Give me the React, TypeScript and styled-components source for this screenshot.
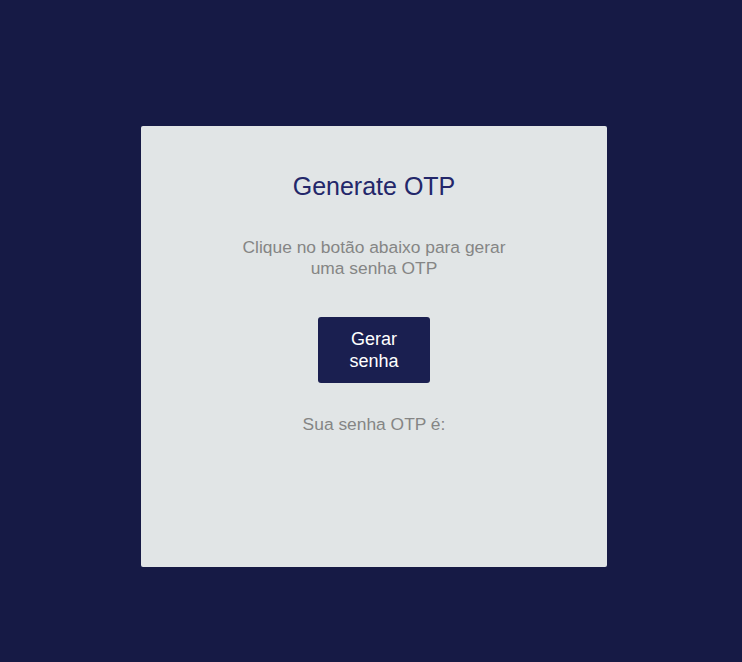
import React from "react";
import styled, { createGlobalStyle } from "styled-components";

const Global = createGlobalStyle`
  html, body { margin: 0; padding: 0; background: #161a45; }
  body { font-family: "Liberation Sans", Arial, sans-serif; }
`;

const Page = styled.div`
  min-height: 662px;
  box-sizing: border-box;
  display: flex;
  justify-content: center;
  align-items: flex-start;
  padding: 126px 0 0 6px;
`;

const Card = styled.div`
  width: 466px;
  height: 441px;
  box-sizing: border-box;
  background: #e1e5e6;
  border-radius: 2px;
  display: flex;
  flex-direction: column;
  align-items: center;
  padding-top: 46px;
  text-align: center;
`;

const Title = styled.h2`
  margin: 0;
  font-size: 25px;
  line-height: 28px;
  font-weight: 400;
  color: #23276a;
`;

const Text = styled.p<{ $top: number }>`
  margin: ${(p) => p.$top}px 0 0;
  font-size: 17.4px;
  line-height: 21px;
  color: #858585;
  max-width: 290px;
`;

const Button = styled.button`
  margin-top: 38px;
  width: 112px;
  height: 66px;
  padding: 0 20px;
  border: none;
  border-radius: 3px;
  background: #1a1f50;
  color: #ffffff;
  font-family: "Liberation Sans", Arial, sans-serif;
  font-size: 18px;
  line-height: 22px;
  cursor: pointer;
`;

export default function App() {
  return (
    <>
      <Global />
      <Page>
        <Card>
          <Title>Generate OTP</Title>
          <Text $top={37}>Clique no botão abaixo para gerar uma senha OTP</Text>
          <Button>Gerar senha</Button>
          <Text $top={31}>Sua senha OTP é:</Text>
        </Card>
      </Page>
    </>
  );
}
